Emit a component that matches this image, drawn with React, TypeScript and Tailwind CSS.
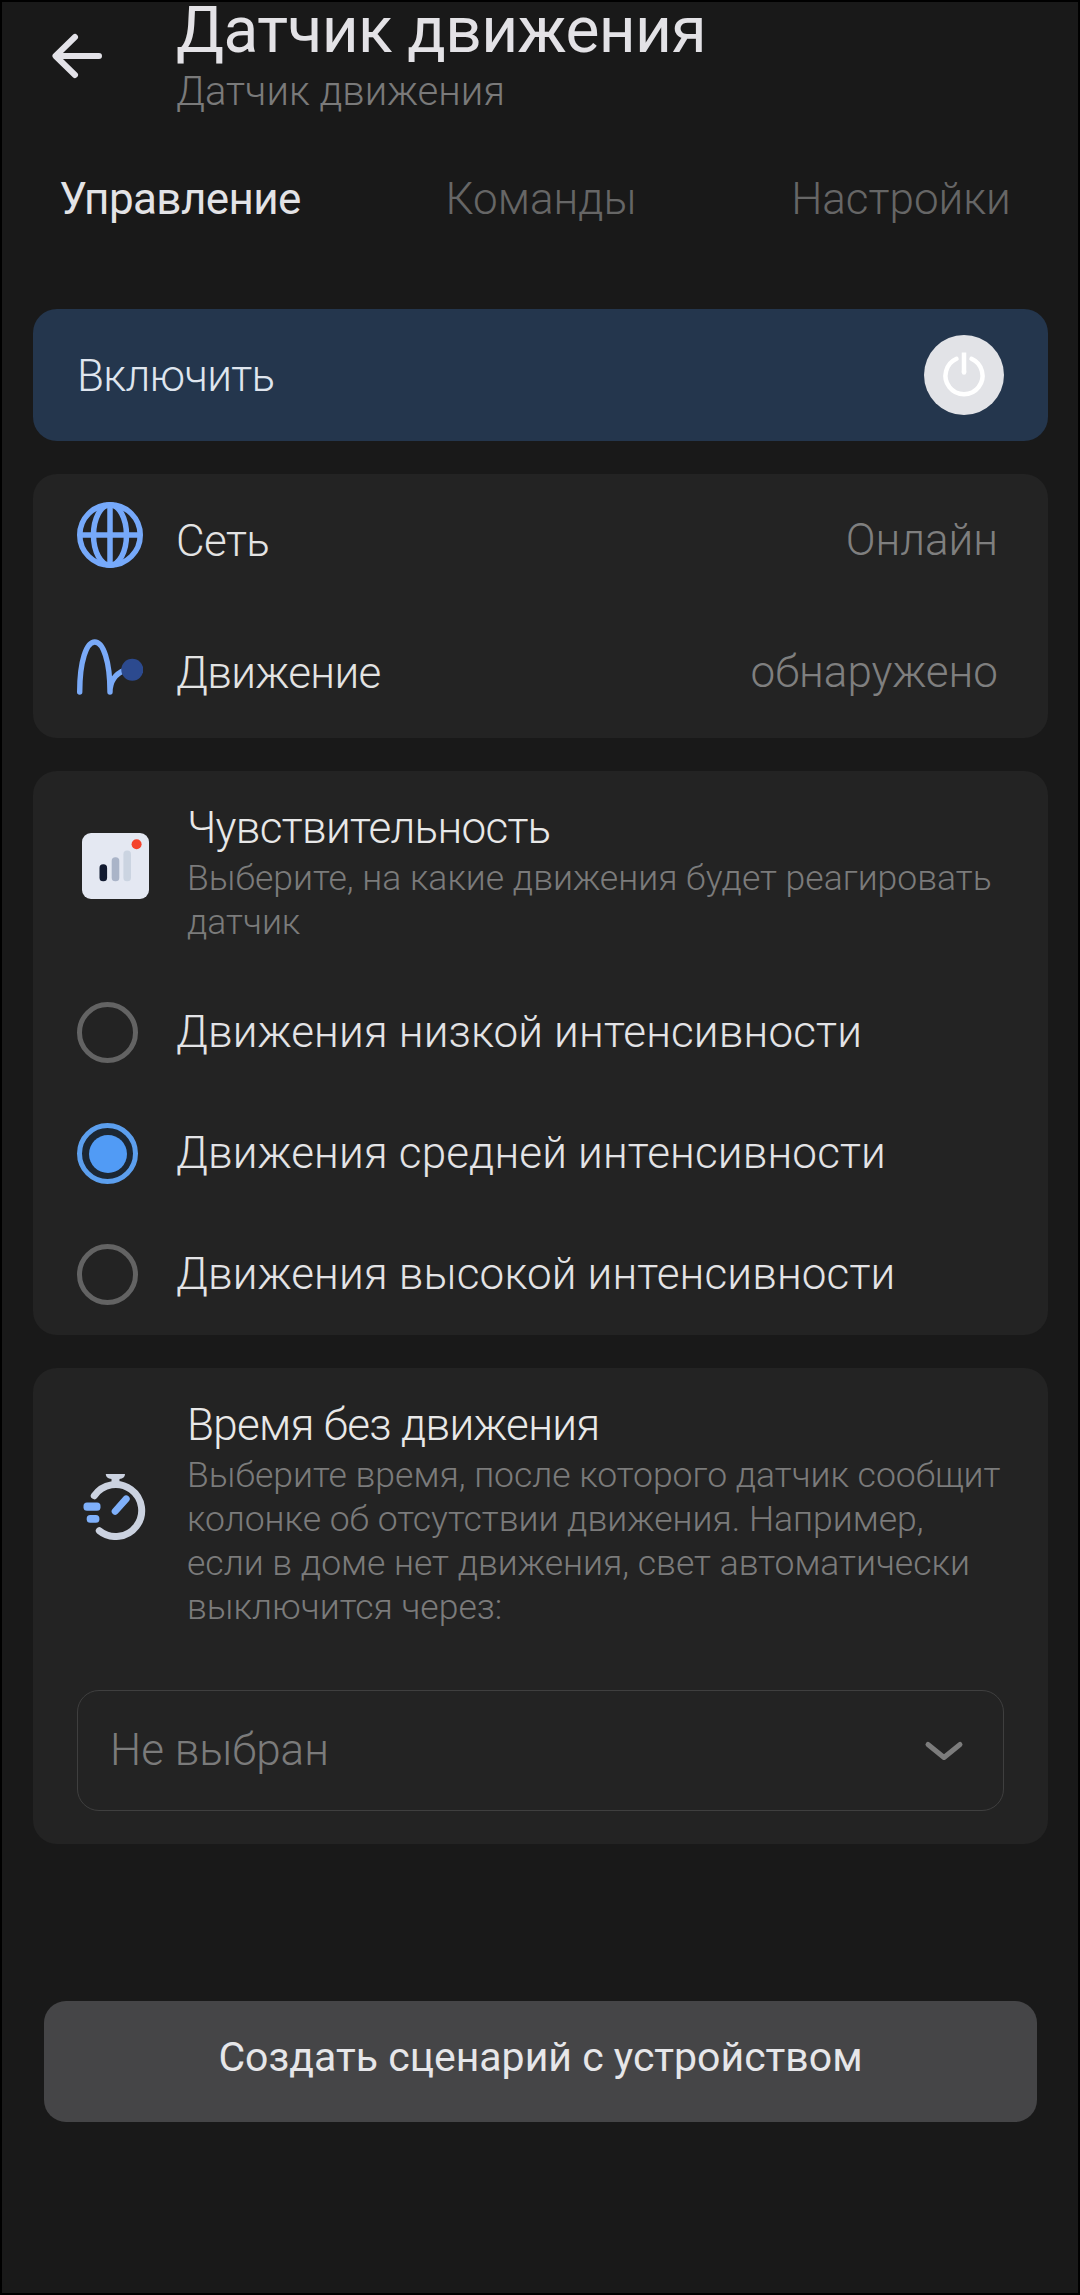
import { useState } from 'react';
import type { ReactNode } from 'react';
import clsx from 'clsx';

const tabs = ['Управление', 'Команды', 'Настройки'];

const levels = [
  { id: 'low', label: 'Движения низкой интенсивности' },
  { id: 'medium', label: 'Движения средней интенсивности' },
  { id: 'high', label: 'Движения высокой интенсивности' },
];

const BackIcon = () => (
  <svg className="w-[52px] h-[48px]" viewBox="0 0 52 48" fill="none" stroke="#e3e2e8" strokeWidth={6} strokeLinecap="round" strokeLinejoin="round">
    <path d="M48 24H5M24 5L4.500 24L24 43" />
  </svg>
);

const PowerIcon = () => (
  <svg className="w-[48px] h-[48px]" viewBox="0 0 48 48" fill="none" stroke="#ffffff" strokeWidth={4.5} strokeLinecap="round">
    <path d="M16.500 7.800A18.500 18.500 0 1 0 31.500 7.800" />
    <path d="M24 1.500V21.500" strokeLinecap="butt" />
    <path d="M24 20V21.500" />
  </svg>
);

const GlobeIcon = () => (
  <svg className="w-[66px] h-[66px]" viewBox="0 0 66 66" fill="none" stroke="#76a9fa" strokeWidth={5.5}>
    <circle cx="33" cy="33" r="30.250" />
    <ellipse cx="33" cy="33" rx="16.500" ry="30.250" />
    <path d="M33 3V63M3 33H63" />
  </svg>
);

const MotionIcon = () => (
  <svg className="w-[66px] h-[56px]" viewBox="0 0 66 56" fill="none" stroke="#7aaaf8" strokeWidth={5.4} strokeLinecap="round">
    <path d="M2.700 53C2.700 22 9.500 3 17.800 3S33 22 33 53C33 42 38 35 48 31" strokeLinejoin="round" />
    <circle cx="55.300" cy="30.700" r="11" fill="#2c4a8f" stroke="none" />
  </svg>
);

const SignalIcon = () => (
  <svg className="w-[67px] h-[66px]" viewBox="0 0 67 66">
    <rect width="67" height="66" rx="9" fill="#e4e8f2" />
    <rect x="17.500" y="31.300" width="7.600" height="17" rx="3.600" fill="#111a30" />
    <rect x="29.700" y="24.300" width="7.600" height="24" rx="3.600" fill="#aab4c8" />
    <rect x="41.400" y="17.600" width="7.600" height="30.700" rx="3.600" fill="#cbd4e1" />
    <circle cx="54.600" cy="11.300" r="5" fill="#f4432c" />
  </svg>
);

const StopwatchIcon = () => (
  <svg className="w-[67px] h-[66px]" viewBox="0 0 67 66" fill="none" strokeWidth={7} strokeLinecap="round">
    <path d="M23.800 0H43C43 3 41 4.800 37.500 5V9H29.500V5C26 4.800 23.800 3 23.800 0Z" fill="#cbd2e0" />
    <path d="M12.300 21.700A26 26 0 1 1 17.300 56.700" stroke="#cbd2e0" />
    <path d="M33.200 37.300L44.200 24.900" stroke="#7fb0fa" />
    <rect x="1.500" y="28.600" width="17" height="8.200" rx="3.500" fill="#7fb0fa" />
    <rect x="4.700" y="41" width="12.700" height="7.800" rx="3.500" fill="#7fb0fa" />
  </svg>
);

const ChevronIcon = () => (
  <svg className="w-[40px] h-[22px]" viewBox="0 0 40 22" fill="none" stroke="#7c7c7c" strokeWidth={5} strokeLinecap="round" strokeLinejoin="round">
    <path d="M4 4.500L20 17.500L36 4.500" />
  </svg>
);

const Card = ({ children, className = 'bg-[#232323]' }: { children: ReactNode; className?: string }) => (
  <section className={clsx('rounded-3xl', className)}>{children}</section>
);

const StatusRow = ({ icon, label, value }: { icon: ReactNode; label: string; value: string }) => (
  <div className="flex h-[132px] items-center pl-11 pr-[50px]">
    <div className="mb-2.5 w-[99px] shrink-0">{icon}</div>
    <span className="flex-1 pt-0.5 tracking-[-0.6px] text-[#e3e3e3]">{label}</span>
    <span className="text-[#7f7f7f]">{value}</span>
  </div>
);

const SectionHeader = ({ icon, title, children }: { icon: ReactNode; title: string; children: ReactNode }) => (
  <div className="flex items-center pl-[49px] pr-10 pt-[31px]">
    <div className="mb-[15px] w-[105px] shrink-0">{icon}</div>
    <div className="flex-1">
      <h2 className="leading-[52px] tracking-[-0.7px] text-[#e8e8e8]">{title}</h2>
      <p className="mt-0.5 text-[35.5px] leading-[44px] text-[#7b7b7b]">{children}</p>
    </div>
  </div>
);

export default function App() {
  const [tab, setTab] = useState(tabs[0]);
  const [level, setLevel] = useState('medium');

  return (
    <div className="h-[2295px] w-[1080px] border-2 border-black bg-[#191919] font-['Roboto',sans-serif] text-[44px] font-light leading-[52px]">
      <div className="-m-0.5 w-[1080px]">
        <header className="flex h-[173px]">
          <button className="ml-[51px] mt-8 h-[48px] w-[125px] shrink-0">
            <BackIcon />
          </button>
          <div>
            <h1 className="text-[64px] font-normal leading-[62px] tracking-[-0.6px] text-[#e3e2e6]">Датчик движения</h1>
            <p className="mt-1.5 text-[40px] leading-[48px] text-[#7a7a7a]">Датчик движения</p>
          </div>
        </header>

        <nav className="grid grid-cols-3">
          {tabs.map((name) => (
            <button
              key={name}
              onClick={() => setTab(name)}
              className={clsx('text-center', tab === name ? 'font-normal tracking-[-0.6px] text-[#e3e3e6]' : 'pl-0.5 text-[#666666]')}
            >
              {name}
            </button>
          ))}
        </nav>

        <main className="mt-[84px] flex flex-col gap-[33px] pl-[33px] pr-8">
          <Card className="flex h-[132px] items-center justify-between bg-[#24364d] px-11">
            <span className="pt-0.5 tracking-[-0.7px] text-[#dfe5ee]">Включить</span>
            <button className="flex size-20 items-center justify-center rounded-full bg-[#e2e3e7]">
              <PowerIcon />
            </button>
          </Card>

          <Card>
            <StatusRow icon={<GlobeIcon />} label="Сеть" value="Онлайн" />
            <StatusRow icon={<MotionIcon />} label="Движение" value="обнаружено" />
          </Card>

          <Card className="h-[564px] bg-[#232323]">
            <SectionHeader icon={<SignalIcon />} title="Чувствительность">
              Выберите, на какие движения будет реагировать датчик
            </SectionHeader>
            <div className="mt-7">
              {levels.map(({ id, label }) => (
                <button key={id} onClick={() => setLevel(id)} className="flex h-[121px] w-full items-center pl-11 text-left tracking-[0.15px] text-[#e3e3e6]">
                  <span
                    className={clsx(
                      'mr-[38px] flex size-[61px] shrink-0 items-center justify-center rounded-full border-[5px]',
                      level === id ? 'border-[#5c9fee] bg-[#1c2733]' : 'border-[#636363]'
                    )}
                  >
                    {level === id && <span className="size-[38px] rounded-full bg-[#519bf5]" />}
                  </span>
                  <span className="pb-0.5">{label}</span>
                </button>
              ))}
            </div>
          </Card>

          <Card className="h-[476px] bg-[#232323]">
            <SectionHeader icon={<StopwatchIcon />} title="Время без движения">
              Выберите время, после которого датчик сообщит колонке об отсутствии движения. Например, если в доме нет движения, свет автоматически выключится через:
            </SectionHeader>
            <button className="mx-11 mt-[61px] flex h-[121px] w-[927px] items-center justify-between rounded-[22px] border border-[#3f3f3f] pl-8 pr-[39px] text-[#7b7b7b]">
              <span className="pb-px">Не выбран</span>
              <ChevronIcon />
            </button>
          </Card>
        </main>

        <button className="ml-11 mt-[157px] h-[121px] w-[993px] rounded-[22px] bg-[#454547] pb-[9px] text-[41px] font-normal text-[#e6e6e9]">
          Создать сценарий с устройством
        </button>
      </div>
    </div>
  );
}
